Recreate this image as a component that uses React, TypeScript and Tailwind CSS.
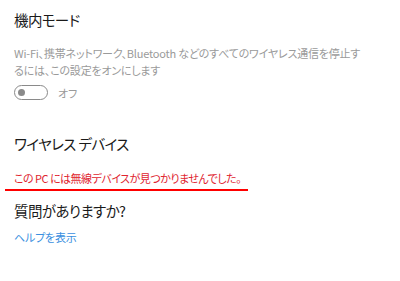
export default function App() {
  return (
    <div
      className="w-[400px] h-[281px] overflow-hidden bg-white [font-feature-settings:'palt']"
      style={{ fontFamily: '"Noto Sans CJK JP", "Noto Sans", sans-serif' }}
    >
      <div className="pl-[14px] pr-3 pt-[10px]">
        <h2 className="text-[14.5px] leading-[20px] tracking-[-0.6px] text-[#1a1a1a]">機内モード</h2>
        <p className="mt-[15px] text-[11px] leading-[17px] tracking-[-0.2px] text-[#9a9a9a] whitespace-nowrap">
          Wi-Fi、携帯ネットワーク、Bluetooth などのすべてのワイヤレス通信を停止す
          <br />
          るには、この設定をオンにします
        </p>
        <div className="mt-[6px] flex items-center gap-[10px]">
          <div className="w-[34px] h-[15px] rounded-full border-[1.5px] border-[#8a8a8a] flex items-center pl-[3px]">
            <div className="w-[7px] h-[7px] rounded-full bg-[#8a8a8a]" />
          </div>
          <span className="text-[11px] leading-[14px] text-[#9a9a9a]">オフ</span>
        </div>

        <h2 className="mt-[34px] text-[14.5px] leading-[20px] tracking-[-0.6px] text-[#1a1a1a]">ワイヤレス デバイス</h2>
        <p className="mt-[16px] text-[11px] leading-[16px] tracking-[-0.5px] text-[#e0242f]">
          この PC には無線デバイスが見つかりませんでした。
        </p>
      </div>
      <div className="ml-[5px] mt-[3px] w-[243px] h-[2px] bg-[#ff0000]" />
      <div className="pl-[14px]">
        <h2 className="mt-[10px] text-[14.5px] leading-[20px] tracking-[-0.6px] text-[#1a1a1a]">質問がありますか?</h2>
        <a className="block mt-[8px] text-[11px] leading-[16px] tracking-[-0.2px] text-[#3a8fe0]">ヘルプを表示</a>
      </div>
    </div>
  );
}
